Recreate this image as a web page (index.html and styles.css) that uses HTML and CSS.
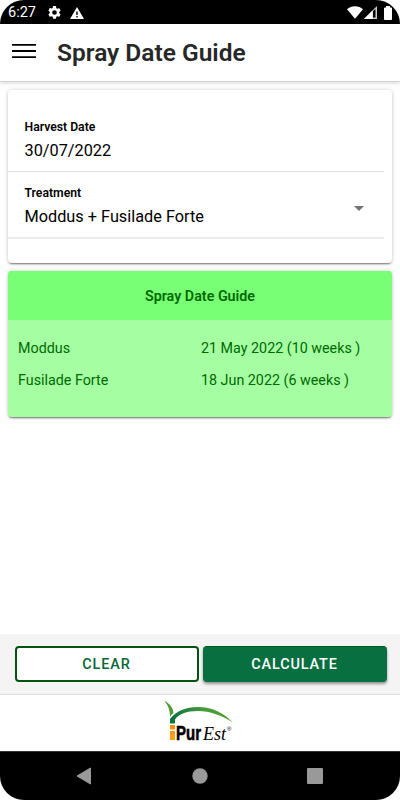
FILE: index.html
```html
<!DOCTYPE html>
<html lang="en">
<head>
    <meta charset="UTF-8">
    <meta name="viewport" content="width=device-width, initial-scale=1.0">
    <title>Spray Date Guide</title>
    <link rel="stylesheet" href="styles.css">
</head>
<body>
    <div class="screen">
        <div class="status-bar">
            <span class="time">6:27</span>
            <svg class="gear" width="13" height="13" viewBox="2 2 20 20"><path fill="#fff" fill-rule="evenodd" d="M19.14 12.94c.04-.3.06-.61.06-.94s-.02-.64-.07-.94l2.03-1.58c.18-.14.23-.41.12-.61l-1.92-3.32c-.12-.22-.37-.29-.59-.22l-2.39.96c-.5-.38-1.03-.7-1.62-.94l-.36-2.54A.48.48 0 0 0 13.92 2h-3.84c-.24 0-.43.17-.47.41l-.36 2.54c-.59.24-1.13.57-1.62.94l-2.39-.96c-.22-.08-.47 0-.59.22L2.74 8.87c-.12.21-.08.47.12.61l2.03 1.58c-.05.3-.09.63-.09.94s.02.64.07.94l-2.03 1.58c-.18.14-.23.41-.12.61l1.92 3.32c.12.22.37.29.59.22l2.39-.96c.5.38 1.03.7 1.62.94l.36 2.54c.05.24.24.41.48.41h3.84c.24 0 .44-.17.47-.41l.36-2.54c.59-.24 1.13-.56 1.62-.94l2.39.96c.22.08.47 0 .59-.22l1.92-3.32c.12-.22.07-.47-.12-.61zM12 15.6a3.6 3.6 0 1 1 0-7.2 3.6 3.6 0 0 1 0 7.2z"/></svg>
            <svg class="warning" width="14" height="12" viewBox="0 0 14 12"><path fill="#fff" fill-rule="evenodd" d="M7 0l7 12H0zM6.3 4.5V8h1.4V4.5zM6.3 9v1.4h1.4V9z"/></svg>
            <svg class="wifi" width="16" height="13" viewBox="0 0 16 13"><path fill="#fff" d="M0 3.2C2.2 1.2 5 .2 8 .2s5.800 1 8 3L8 12.800z"/></svg>
            <svg class="signal" width="13" height="13" viewBox="0 0 13 13"><path fill="#ccc" d="M0 13L13 0v13z"/><path fill="#fff" d="M0 13l8.500-8.500V13z"/><path fill="#000" d="M9 5.200l2.500-2.200v8.500H9z"/></svg>
            <svg class="battery" width="8" height="14" viewBox="0 0 8 14"><path fill="#fff" d="M2 1.400V0h4v1.400h1.200q.8 0 .8.800v11q0 .8-.8.800H.8q-.8 0-.8-.8v-11q0-.8.800-.8z"/></svg>
        </div>

        <header class="header">
            <svg width="24" height="16" viewBox="0 0 24 16"><path d="M0 1.800h24M0 8h24M0 14.200h24" stroke="#000" stroke-width="1.800"/></svg>
            <h1>Spray Date Guide</h1>
        </header>

        <main class="content">
            <div class="card form-card">
                <div class="item">
                    <label>Harvest Date</label>
                    <div class="value">30/07/2022</div>
                </div>
                <div class="item treatment">
                    <label>Treatment</label>
                    <div class="value">Moddus + Fusilade Forte</div>
                    <span class="arrow"></span>
                </div>
            </div>

            <div class="card result-card">
                <div class="result-title">Spray Date Guide</div>
                <div class="results">
                    <span>Moddus</span>
                    <span>21 May 2022 (10 weeks )</span>
                    <span>Fusilade Forte</span>
                    <span>18 Jun 2022 (6 weeks )</span>
                </div>
            </div>
        </main>

        <div class="actions">
            <button class="btn btn-clear">CLEAR</button>
            <button class="btn btn-calculate">CALCULATE</button>
        </div>

        <footer class="footer">
            <svg width="72" height="46" viewBox="0 0 72 46">
                <defs>
                    <linearGradient id="arc" x1="0" x2="1">
                        <stop offset="0" stop-color="#08703f"/>
                        <stop offset=".5" stop-color="#43993a"/>
                        <stop offset="1" stop-color="#4fa52b"/>
                    </linearGradient>
                    <linearGradient id="stem" x1="0" y1="0" x2="0" y2="1">
                        <stop offset="0" stop-color="#ff8b12"/>
                        <stop offset="1" stop-color="#ffa516"/>
                    </linearGradient>
                </defs>
                <path fill="#4d9d33" d="M0 .5C6 3.500 10 9 9.300 13.500Q7 14 6 17C6 10 4 5 0 .5z"/>
                <path fill="url(#arc)" d="M6 23.500v-4.500C12 11 22 7 34 7c14 0 25 5.500 35 15.500C58 15.500 46 11 34 11c-12 0-19 3-23 8.500v4z"/>
                <path fill="url(#stem)" d="M6 25h5v4.500H6zM6 31h5v9H6z"/>
                <text class="logo-pur" x="12" y="40" textLength="25" lengthAdjust="spacingAndGlyphs">Pur</text>
                <text class="logo-est" x="39" y="40" textLength="23" lengthAdjust="spacingAndGlyphs">Est</text>
                <text class="logo-mark" x="63" y="31">®</text>
            </svg>
        </footer>

        <nav class="nav-bar">
            <svg width="16" height="18" viewBox="0 0 16 18"><path fill="#999" d="M13.500 1v16L0 9z" stroke="#999" stroke-linejoin="round"/></svg>
            <svg width="16" height="16" viewBox="0 0 16 16"><circle cx="8" cy="8" r="7.700" fill="#999"/></svg>
            <svg width="16" height="16" viewBox="0 0 16 16"><rect width="16" height="16" rx="1" fill="#999"/></svg>
        </nav>
    </div>
</body>
</html>
```
FILE: styles.css
```css
* {
    box-sizing: border-box;
}
body {
    margin: 0;
    background-color: #fff;
    font-family: Roboto, sans-serif;
    color: #000;
}
svg {
    display: block;
    flex-shrink: 0;
}
.screen {
    width: 400px;
    height: 800px;
    display: flex;
    flex-direction: column;
    border-radius: 24px;
    overflow: hidden;
}
.status-bar {
    height: 24px;
    display: flex;
    align-items: center;
    padding: 1px 8px 0;
    background-color: #000;
    color: #fff;
}
.time {
    width: 40px;
    font-size: 14.5px;
    line-height: 24px;
}
.warning {
    margin-left: 9px;
}
.wifi {
    margin-left: auto;
}
.signal {
    margin-left: 1px;
}
.battery {
    margin-left: 7px;
}
.header {
    height: 58px;
    display: flex;
    align-items: center;
    gap: 21px;
    padding: 0 12px 3px;
    border-bottom: 1px solid #d2d2d2;
    box-shadow: 0 1px 4px rgba(0, 0, 0, 0.16);
}
.header h1 {
    margin: 3px 0 0;
    font-size: 24.5px;
    font-weight: 600;
    line-height: 32px;
    color: #272727;
}
.content {
    flex: 1;
    padding: 8px;
}
.card {
    border-radius: 4px;
    box-shadow: 0 2px 2px -1px rgba(0, 0, 0, 0.5), 0 0 4px rgba(0, 0, 0, 0.2);
    overflow: hidden;
}
.form-card {
    height: 173px;
    padding: 16px 8px 0 0;
    background-color: #fff;
}
.item {
    height: 66px;
    padding: 13px 0 0 16.5px;
    border-bottom: 1px solid #dedede;
}
.item label {
    display: block;
    font-size: 12.2px;
    font-weight: 600;
    line-height: 16px;
}
.value {
    margin-top: 6px;
    font-size: 16.3px;
    line-height: 20px;
}
.treatment {
    display: grid;
    grid-template-columns: 1fr auto;
    align-content: start;
    padding-right: 20px;
    border-bottom: 2px solid #ececec;
    height: 67px;
}
.treatment label {
    grid-column: 1 / 3;
}
.arrow {
    margin-top: 5px;
    width: 10px;
    height: 5px;
    border: 5px solid transparent;
    border-top-color: #737373;
    border-bottom: 0;
}
.result-card {
    height: 146px;
    margin-top: 8px;
    background-color: #a5ffa2;
    color: #006900;
}
.result-title {
    height: 49px;
    background-color: #79ff76;
    font-size: 14.3px;
    font-weight: 600;
    line-height: 50px;
    text-align: center;
}
.results {
    display: grid;
    grid-template-columns: 183px 1fr;
    padding: 13px 10px;
    font-size: 14.3px;
    line-height: 31.5px;
}
.actions {
    height: 60px;
    display: grid;
    grid-template-columns: 1fr 1fr;
    gap: 4px;
    padding: 12px 13.5px 12px 14.5px;
    background-color: #f4f4f4;
}
.btn {
    height: 36px;
    padding: 0;
    border: 2px solid #005410;
    border-radius: 4px;
    font-family: Roboto, sans-serif;
    font-size: 14.4px;
    font-weight: 500;
    letter-spacing: 0.9px;
}
.btn-clear {
    background-color: #fff;
    color: #056735;
}
.btn-calculate {
    border: 0;
    border-top: 1px solid #005c14;
    background-color: #086f40;
    color: #fff;
    box-shadow: 0 2px 3px rgba(0, 0, 0, 0.4);
}
.footer {
    height: 57px;
    display: flex;
    justify-content: center;
    padding: 5px 0 0;
    border-top: 1px solid #dedede;
    background-color: #fff;
}
.logo-pur {
    font-family: "Liberation Sans", sans-serif;
    font-size: 20px;
    font-weight: bold;
    stroke: #000;
    stroke-width: 0.6px;
}
.logo-est {
    font-family: "Liberation Serif", serif;
    font-size: 19px;
    font-style: italic;
}
.logo-mark {
    font-family: "Liberation Sans", sans-serif;
    font-size: 6px;
}
.nav-bar {
    height: 49px;
    display: flex;
    align-items: center;
    justify-content: center;
    gap: 99px;
    border-top: 1px solid #333;
    background-color: #000;
}
```
